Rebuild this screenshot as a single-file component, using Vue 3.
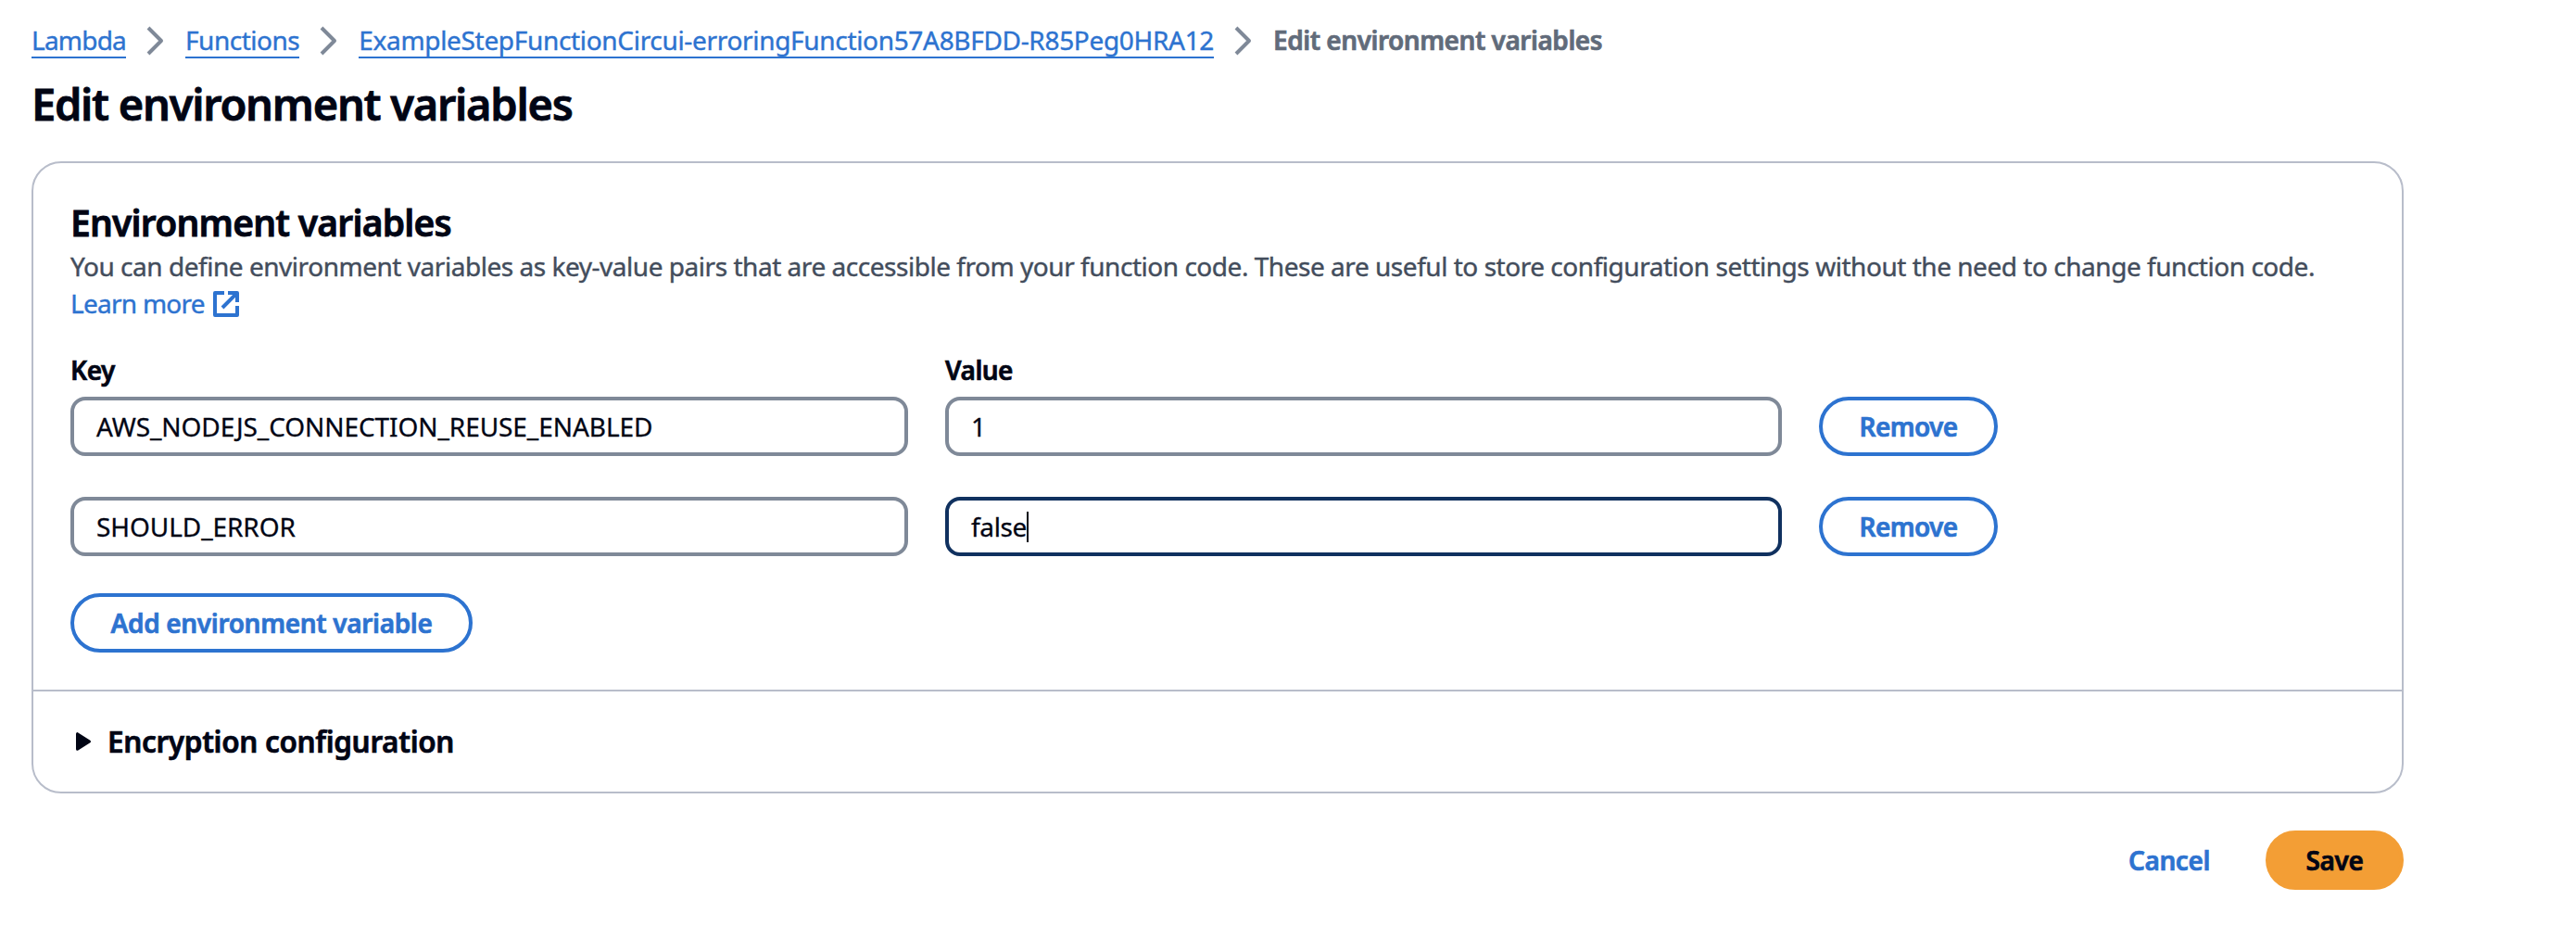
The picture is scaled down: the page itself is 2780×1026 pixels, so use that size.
<script setup>
import { ref } from 'vue'

const crumbs = [
  { text: 'Lambda', cls: 'crumb-service' },
  { text: 'Functions', cls: 'crumb-list' },
  { text: 'ExampleStepFunctionCircui-erroringFunction57A8BFDD-R85Peg0HRA12', cls: 'crumb-name' },
]

const variables = ref([
  { key: 'AWS_NODEJS_CONNECTION_REUSE_ENABLED', value: '1', focused: false },
  { key: 'SHOULD_ERROR', value: 'false', focused: true },
])
</script>

<template>
  <main class="page">
    <nav class="breadcrumbs">
      <template v-for="crumb in crumbs" :key="crumb.text">
        <a class="crumb" :class="crumb.cls">{{ crumb.text }}</a>
        <svg class="chevron" viewBox="0 0 16 16"><path d="m4 1 7 7-7 7" /></svg>
      </template>
      <span class="current">Edit environment variables</span>
    </nav>

    <h1>Edit environment variables</h1>

    <section class="container">
      <div class="main-part">
        <h2>Environment variables</h2>
        <p class="description">You can define environment variables as key-value pairs that are accessible from your function code. These are useful to store configuration settings without the need to change function code.</p>
        <a class="learn">
          <span>Learn more</span>
          <svg class="external" viewBox="0 0 16 16">
            <path d="M9 2h5v5M6 10l8-8M14 9v5H2V2h5" />
          </svg>
        </a>

        <div class="row labels">
          <span class="label-key">Key</span>
          <span class="label-value">Value</span>
        </div>
        <div v-for="item in variables" :key="item.key" class="row fields">
          <div class="field name">{{ item.key }}</div>
          <div class="field" :class="{ focused: item.focused }">
            <span :class="{ typed: item.focused }">{{ item.value }}</span><i v-if="item.focused" class="caret"></i>
          </div>
          <button class="button remove">Remove</button>
        </div>
        <button class="button add">Add environment variable</button>
      </div>

      <div class="expandable">
        <svg class="triangle" viewBox="0 0 40 40"><path d="M7.5 11.7v16.6L20.5 20z" /></svg>
        <span>Encryption configuration</span>
      </div>
    </section>

    <footer class="actions">
      <button class="button cancel">Cancel</button>
      <button class="button save">Save</button>
    </footer>
  </main>
</template>

<style>
body {
  background: #fff;
}
</style>

<style scoped>
.page {
  box-sizing: border-box;
  width: 2780px;
  height: 1026px;
  padding: 25px 186px 0 34px;
  overflow: hidden;
  font-family: "Noto Sans", "Open Sans", sans-serif;
  font-size: 28px;
  line-height: 40px;
  color: #010514;
  white-space: nowrap;
}
h1, h2, p {
  margin: 0;
}
.breadcrumbs {
  display: flex;
  align-items: flex-start;
  gap: 16px;
  height: 38px;
}
.crumb {
  line-height: 36px;
  color: #2d73d0;
  border-bottom: 2px solid #2d73d0;
  -webkit-text-stroke: 0.4px;
}
.crumb-service { letter-spacing: -0.78px; }
.crumb-list { letter-spacing: -0.48px; }
.crumb-name { letter-spacing: -0.32px; }
.chevron {
  width: 32px;
  height: 32px;
  margin-top: 3px;
  fill: none;
  stroke: #7f8998;
  stroke-width: 2;
  stroke-linejoin: round;
}
.current {
  line-height: 36px;
  font-weight: 600;
  letter-spacing: -0.48px;
  color: #616b7a;
  -webkit-text-stroke: 0.7px;
}
h1 {
  margin-top: 19px;
  font-size: 47px;
  line-height: 60px;
  font-weight: 600;
  letter-spacing: -1.28px;
  -webkit-text-stroke: 0.8px;
}
.container {
  box-sizing: border-box;
  height: 682px;
  margin-top: 32px;
  border: 2px solid #b8bdca;
  border-radius: 32px;
}
.main-part {
  box-sizing: border-box;
  height: 570px;
  padding: 40px 40px 0;
  border-bottom: 2px solid #b8bdca;
}
h2 {
  font-size: 39px;
  line-height: 48px;
  font-weight: 600;
  letter-spacing: -0.79px;
  -webkit-text-stroke: 0.8px;
}
.description {
  margin-top: 3px;
  letter-spacing: -0.467px;
  color: #434d5c;
  -webkit-text-stroke: 0.4px;
}
.learn {
  display: flex;
  width: fit-content;
  height: 40px;
  letter-spacing: -0.74px;
  color: #2d73d0;
  -webkit-text-stroke: 0.4px;
}
.external {
  width: 32px;
  height: 32px;
  margin: 5px 0 0 7px;
  fill: none;
  stroke: #2d73d0;
  stroke-width: 2;
  stroke-linejoin: round;
}
.row {
  display: grid;
  grid-template-columns: 904px 903px auto;
  column-gap: 40px;
  justify-content: start;
}
.labels {
  margin-top: 32px;
  font-weight: 600;
  -webkit-text-stroke: 0.7px;
}
.label-key { letter-spacing: -0.43px; }
.label-value { letter-spacing: -0.54px; }
.fields {
  margin-top: 9px;
}
.fields + .fields {
  margin-top: 44px;
}
.field {
  box-sizing: border-box;
  display: flex;
  align-items: center;
  height: 64px;
  padding: 0 24px;
  border: 4px solid #7f8998;
  border-radius: 16px;
  -webkit-text-stroke: 0.3px;
}
.name {
  letter-spacing: -0.07px;
}
.focused {
  border-color: #10315f;
}
.typed {
  letter-spacing: -0.35px;
}
.caret {
  width: 2px;
  height: 33px;
  background: #010514;
}
.button {
  box-sizing: border-box;
  height: 64px;
  margin: 0;
  padding: 0 0 1px;
  border: 4px solid #2d73d0;
  border-radius: 32px;
  background: #fff;
  font: 600 28px/40px "Noto Sans", "Open Sans", sans-serif;
  color: #2d73d0;
  -webkit-text-stroke: 0.7px;
}
.remove {
  width: 193px;
  letter-spacing: -0.62px;
}
.add {
  display: block;
  width: 434px;
  margin-top: 40px;
  letter-spacing: -0.34px;
}
.expandable {
  display: flex;
  padding: 34px 40px 0;
  font-size: 31.5px;
  font-weight: 600;
  letter-spacing: -0.33px;
  -webkit-text-stroke: 0.7px;
}
.triangle {
  width: 40px;
  height: 40px;
  fill: #010514;
  stroke: #010514;
  stroke-width: 3;
  stroke-linejoin: round;
}
.actions {
  display: flex;
  justify-content: flex-end;
  gap: 16px;
  margin-top: 40px;
}
.cancel {
  width: 176px;
  border-color: transparent;
  background: transparent;
  letter-spacing: -0.42px;
}
.save {
  width: 149px;
  border-color: #f39e35;
  background: #f39e35;
  color: #010514;
  letter-spacing: -0.37px;
}
</style>
